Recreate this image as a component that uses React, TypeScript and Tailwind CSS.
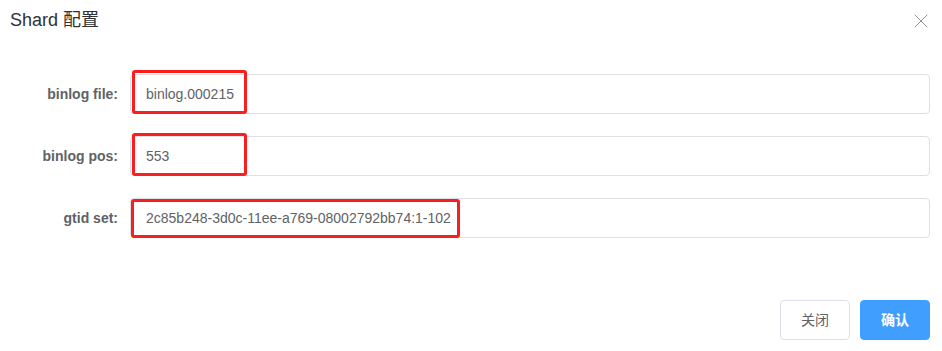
import { X } from "lucide-react";

const rows = [
  { label: "binlog file:", value: "binlog.000215" },
  { label: "binlog pos:", value: "553" },
  { label: "gtid set:", value: "2c85b248-3d0c-11ee-a769-08002792bb74:1-102" }
];

// red annotation boxes drawn over the screenshot
const marks = [
  "left-[132px] top-[70px] w-[115px] h-[44px]",
  "left-[132px] top-[133px] w-[115px] h-[43px]",
  "left-[131px] top-[199px] w-[329px] h-[39px]"
];

export default function App() {
  return (
    <div
      className="relative h-[351px] w-[942px] overflow-hidden bg-white text-[#606266]"
      style={{ fontFamily: '"Liberation Sans", "Noto Sans CJK SC", sans-serif' }}
    >
      <header className="flex h-[44px] items-start pl-[10px] pt-[8px]">
        <span className="text-[18px] leading-[24px] text-[#303133]">Shard 配置</span>
        <button className="absolute right-[9px] top-[9px] text-[#909399]">
          <X size={24} strokeWidth={1} />
        </button>
      </header>

      <form className="flex flex-col gap-[22px] pl-[20px] pr-[12px] pt-[30px]">
        {rows.map((row) => (
          <div key={row.label} className="flex h-[40px]">
            <label className="w-[110px] shrink-0 pr-[12px] text-right text-[14px] font-bold leading-[40px] text-[#606266]">
              {row.label}
            </label>
            <div className="flex flex-1 items-center rounded-[4px] border border-[#DCDFE6] px-[15px] text-[14px]">
              {row.value}
            </div>
          </div>
        ))}
      </form>

      <footer className="flex justify-end gap-[10px] pr-[12px] pt-[62px]">
        <button className="h-[40px] w-[70px] rounded-[4px] border border-[#DCDFE6] bg-white text-[14px] text-[#606266]">
          关闭
        </button>
        <button className="h-[40px] w-[70px] rounded-[4px] border border-[#409EFF] bg-[#409EFF] text-[14px] font-bold text-white">
          确认
        </button>
      </footer>

      {marks.map((m) => (
        <div key={m} className={`pointer-events-none absolute rounded-[3px] border-[3px] border-[#fa1e1e] ${m}`} />
      ))}
    </div>
  );
}
